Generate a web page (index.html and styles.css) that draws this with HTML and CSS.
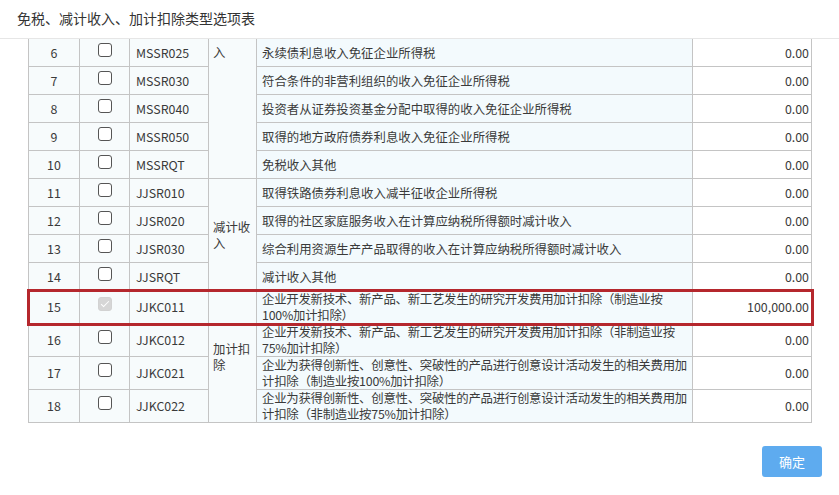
FILE: index.html
```html
<!DOCTYPE html>
<html lang="zh-CN">
<head>
    <meta charset="UTF-8">
    <meta name="viewport" content="width=device-width, initial-scale=1.0">
    <title>免税、减计收入、加计扣除类型选项表</title>
    <link rel="stylesheet" href="styles.css">
</head>
<body>
    <div class="dialog">
        <div class="dialog-head">免税、减计收入、加计扣除类型选项表</div>

        <div class="dialog-body">
            <table class="grid">
                <colgroup>
                    <col style="width:51px">
                    <col style="width:50px">
                    <col style="width:79px">
                    <col style="width:48px">
                    <col style="width:436px">
                    <col style="width:119px">
                </colgroup>
                <tbody>
                    <!-- 免税收入 (tail) -->
                    <tr>
                        <td class="no">6</td>
                        <td class="chk"><span class="box"></span></td>
                        <td class="code">MSSR025</td>
                        <td class="cat top" rowspan="5">入</td>
                        <td class="desc">永续债利息收入免征企业所得税</td>
                        <td class="amt">0.00</td>
                    </tr>
                    <tr>
                        <td class="no">7</td>
                        <td class="chk"><span class="box"></span></td>
                        <td class="code">MSSR030</td>
                        <td class="desc">符合条件的非营利组织的收入免征企业所得税</td>
                        <td class="amt">0.00</td>
                    </tr>
                    <tr>
                        <td class="no">8</td>
                        <td class="chk"><span class="box"></span></td>
                        <td class="code">MSSR040</td>
                        <td class="desc">投资者从证券投资基金分配中取得的收入免征企业所得税</td>
                        <td class="amt">0.00</td>
                    </tr>
                    <tr>
                        <td class="no">9</td>
                        <td class="chk"><span class="box"></span></td>
                        <td class="code">MSSR050</td>
                        <td class="desc">取得的地方政府债券利息收入免征企业所得税</td>
                        <td class="amt">0.00</td>
                    </tr>
                    <tr>
                        <td class="no">10</td>
                        <td class="chk"><span class="box"></span></td>
                        <td class="code">MSSRQT</td>
                        <td class="desc">免税收入其他</td>
                        <td class="amt">0.00</td>
                    </tr>

                    <!-- 减计收入 -->
                    <tr>
                        <td class="no">11</td>
                        <td class="chk"><span class="box"></span></td>
                        <td class="code">JJSR010</td>
                        <td class="cat" rowspan="4">减计收入</td>
                        <td class="desc">取得铁路债券利息收入减半征收企业所得税</td>
                        <td class="amt">0.00</td>
                    </tr>
                    <tr>
                        <td class="no">12</td>
                        <td class="chk"><span class="box"></span></td>
                        <td class="code">JJSR020</td>
                        <td class="desc">取得的社区家庭服务收入在计算应纳税所得额时减计收入</td>
                        <td class="amt">0.00</td>
                    </tr>
                    <tr>
                        <td class="no">13</td>
                        <td class="chk"><span class="box"></span></td>
                        <td class="code">JJSR030</td>
                        <td class="desc">综合利用资源生产产品取得的收入在计算应纳税所得额时减计收入</td>
                        <td class="amt">0.00</td>
                    </tr>
                    <tr>
                        <td class="no">14</td>
                        <td class="chk"><span class="box"></span></td>
                        <td class="code">JJSRQT</td>
                        <td class="desc">减计收入其他</td>
                        <td class="amt">0.00</td>
                    </tr>

                    <!-- 加计扣除 -->
                    <tr class="picked">
                        <td class="no">15</td>
                        <td class="chk"><span class="box checked"></span></td>
                        <td class="code">JJKC011</td>
                        <td class="cat" rowspan="4">加计扣除</td>
                        <td class="desc two">企业开发新技术、新产品、新工艺发生的研究开发费用加计扣除（制造业按<br>100%加计扣除）</td>
                        <td class="amt">100,000.00</td>
                    </tr>
                    <tr class="tall">
                        <td class="no">16</td>
                        <td class="chk"><span class="box"></span></td>
                        <td class="code">JJKC012</td>
                        <td class="desc two">企业开发新技术、新产品、新工艺发生的研究开发费用加计扣除（非制造业按<br>75%加计扣除）</td>
                        <td class="amt">0.00</td>
                    </tr>
                    <tr class="tall">
                        <td class="no">17</td>
                        <td class="chk"><span class="box"></span></td>
                        <td class="code">JJKC021</td>
                        <td class="desc two">企业为获得创新性、创意性、突破性的产品进行创意设计活动发生的相关费用加<br>计扣除（制造业按100%加计扣除）</td>
                        <td class="amt">0.00</td>
                    </tr>
                    <tr class="tall">
                        <td class="no">18</td>
                        <td class="chk"><span class="box"></span></td>
                        <td class="code">JJKC022</td>
                        <td class="desc two">企业为获得创新性、创意性、突破性的产品进行创意设计活动发生的相关费用加<br>计扣除（非制造业按75%加计扣除）</td>
                        <td class="amt">0.00</td>
                    </tr>
                </tbody>
            </table>
        </div>

        <div class="dialog-foot">
            <button class="btn-ok">确定</button>
        </div>
    </div>
</body>
</html>
```

FILE: styles.css
```css
body {
    margin: 0;
    background: #fff;
    font-family: "Noto Sans CJK SC", "Noto Sans", sans-serif;
    color: #333;
}

.dialog {
    width: 839px;
    height: 495px;
    background: #fff;
}

.dialog-head {
    height: 38px;
    line-height: 36px;
    padding-left: 17px;
    font-size: 14px;
    color: #333;
    border-bottom: 1px solid #e6e6e6;
}

.dialog-body {
    padding: 0 28px;
}

.grid {
    width: 783px;
    table-layout: fixed;
    border-collapse: collapse;
    font-size: 12.4px;
    color: #3a3a3a;
}

.grid td {
    height: 27px;
    padding: 0;
    border: 1px solid #c4c4c4;
    background: #f7fbfc;
    line-height: 16px;
    vertical-align: middle;
}

.grid tr:first-child td {
    border-top: 0;
}

.grid .no {
    text-align: center;
}

.grid .chk {
    text-align: center;
}

.grid .code {
    padding-left: 6px;
}

.grid .cat {
    padding: 0 4px;
}

.grid .cat.top {
    vertical-align: top;
    padding-top: 5px;
}

.grid .desc {
    padding: 0 5px;
    background: #f3fafd;
}

.grid .desc.two {
    padding-right: 0;
    white-space: nowrap;
    letter-spacing: -0.25px;
}

.grid .amt {
    text-align: right;
    padding-right: 2px;
    background: #fff;
}

.grid tr.picked,
.grid tr.tall {
    height: 33px;
}

.grid tr.picked {
    outline: 3px solid #b5272d;
    outline-offset: -1px;
}

.box {
    display: inline-block;
    width: 12px;
    height: 12px;
    border: 1px solid #555;
    border-radius: 3px;
    background: #fff;
    vertical-align: -1px;
    position: relative;
    top: -2px;
}

.box.checked {
    border-color: #d2d2d2;
    background: #d6d6d6;
}

.box.checked::after {
    content: "";
    position: absolute;
    left: 4px;
    top: 1px;
    width: 3px;
    height: 7px;
    border: solid #fff;
    border-width: 0 1.5px 1.5px 0;
    transform: rotate(45deg);
}

.dialog-foot {
    display: flex;
    justify-content: flex-end;
    padding: 23px 17px 0 0;
}

.btn-ok {
    width: 60px;
    height: 31px;
    border: none;
    border-radius: 3px;
    background: #5eabef;
    color: #fff;
    font-family: inherit;
    font-size: 13px;
    cursor: pointer;
}
```
